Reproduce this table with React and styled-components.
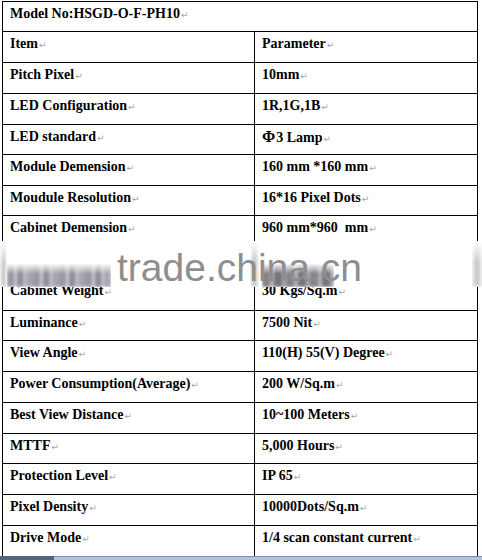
import React from "react";
import styled, { createGlobalStyle } from "styled-components";

const Global = createGlobalStyle`
  html, body { margin: 0; padding: 0; background: #fff; overflow: hidden; }
  #root { width: 482px; height: 560px; }
`;

const Page = styled.div`
  position: relative;
  width: 482px;
  height: 560px;
  display: flex;
  flex-direction: column;
  background: #fff;
  font-family: "Liberation Serif", "Times New Roman", serif;
`;

const Table = styled.div`
  box-sizing: border-box;
  width: 476px;
  margin: 1px 0 0 2px;
  border: 1px solid #000;
  border-bottom: none;
  display: flex;
  flex-direction: column;
`;

const Row = styled.div`
  box-sizing: border-box;
  height: ${(p) => p.$h}px;
  display: grid;
  grid-template-columns: ${(p) => (p.$full ? "1fr" : "252px 1fr")};
  border-bottom: ${(p) => (p.$noLine ? "none" : "1px solid #000")};
`;

const Cell = styled.div`
  box-sizing: border-box;
  padding: ${(p) => p.$pt ?? 4}px 0 0 7px;
  font-size: 14px;
  line-height: 15px;
  font-weight: bold;
  color: #000;
  white-space: pre;
  border-right: ${(p) => (p.$divider ? "1px solid #000" : "none")};
`;

const Mark = styled.span`
  font-family: "DejaVu Sans", sans-serif;
  font-weight: normal;
  font-size: 9px;
  color: #a4a4a4;
  margin-left: 1px;
`;

const Phi = styled.span`
  font-size: 16px;
  margin-right: 1px;
`;

const Band = styled.div`
  position: absolute;
  left: 0;
  top: 241px;
  width: 482px;
  height: 46px;
  background: #fff;
  overflow: hidden;
`;

const Smudge = styled.div`
  position: absolute;
  left: ${(p) => p.$x}px;
  top: ${(p) => p.$y}px;
  width: ${(p) => p.$w}px;
  height: ${(p) => p.$hh}px;
  background: ${(p) => p.$bg};
  filter: blur(${(p) => p.$blur}px);
  opacity: ${(p) => p.$o};
  -webkit-mask-image: linear-gradient(to bottom, transparent 0%, #000 45%, #000 100%);
  mask-image: linear-gradient(to bottom, transparent 0%, #000 45%, #000 100%);
`;

const Watermark = styled.div`
  position: absolute;
  left: 117px;
  top: 7px;
  font-family: "Liberation Sans", Arial, sans-serif;
  font-size: 39px;
  line-height: 39px;
  color: #8e8e8e;
  white-space: nowrap;
`;

const Bar = styled.div`
  display: grid;
  grid-template-columns: 54px 1fr;
  height: 4px;
`;

const BarLeft = styled.div`
  background: #55647a;
`;

const BarRight = styled.div`
  background: #b2c2d8;
  border-top: 1px solid #7a8fae;
`;

const rows = [
  ["Item", "Parameter", 31],
  ["Pitch Pixel", "10mm", 31],
  ["LED Configuration", "1R,1G,1B", 31],
  ["LED standard", "PHI", 30],
  ["Module Demension", "160 mm *160 mm", 31],
  ["Moudule Resolution", "16*16 Pixel Dots", 30],
  ["Cabinet Demension", "960 mm*960  mm", 62, true],
  ["Cabinet Weight", "30 Kgs/Sq.m", 33, false, 5],
  ["Luminance", "7500 Nit", 30],
  ["View Angle", "110(H) 55(V) Degree", 31],
  ["Power Consumption(Average)", "200 W/Sq.m", 31],
  ["Best View Distance", "10~100 Meters", 31],
  ["MTTF", "5,000 Hours", 30],
  ["Protection Level", "IP 65", 31],
  ["Pixel Density", "10000Dots/Sq.m", 31],
  ["Drive Mode", "1/4 scan constant current", 30, true],
];

const stripesA =
  "repeating-linear-gradient(90deg, #8a8790 0px, #8a8790 7px, #c6bfd0 7px, #c6bfd0 10px, #7c7c84 10px, #7c7c84 16px, #b3aec0 16px, #b3aec0 20px, #9a96a2 20px, #9a96a2 26px)";
const stripesB =
  "repeating-linear-gradient(90deg, #6f6f74 0px, #6f6f74 8px, #a8a4b0 8px, #a8a4b0 12px, #5e5e64 12px, #5e5e64 20px, #9d98a8 20px, #9d98a8 24px)";
const lineBlur = "linear-gradient(90deg, transparent, #9a9a9a, transparent)";

export default function App() {
  return (
    <>
      <Global />
      <Page>
        <Table>
          <Row $h={30} $full>
            <Cell>
              Model No:HSGD-O-F-PH10<Mark>↵</Mark>
            </Cell>
          </Row>
          {rows.map(([k, v, h, noLine, pt]) => (
            <Row key={k} $h={h} $noLine={noLine}>
              <Cell $divider $pt={pt}>
                {k}
                <Mark>↵</Mark>
              </Cell>
              <Cell $pt={pt}>
                {v === "PHI" ? (
                  <>
                    <Phi>Φ</Phi>3 Lamp
                  </>
                ) : (
                  v
                )}
                <Mark>↵</Mark>
              </Cell>
            </Row>
          ))}
        </Table>
        <Bar>
          <BarLeft />
          <BarRight />
        </Bar>
        <Band>
          <Smudge $x={0} $y={0} $w={7} $hh={46} $bg={lineBlur} $blur={1.5} $o={0.7} />
          <Smudge $x={250} $y={0} $w={9} $hh={46} $bg={lineBlur} $blur={1.5} $o={0.7} />
          <Smudge $x={472} $y={0} $w={10} $hh={46} $bg={lineBlur} $blur={2} $o={0.8} />
          <Smudge $x={7} $y={22} $w={104} $hh={24} $bg={stripesA} $blur={1.5} $o={0.85} />
          <Smudge $x={262} $y={22} $w={72} $hh={24} $bg={stripesB} $blur={1.5} $o={0.85} />
          <Watermark>trade.china.cn</Watermark>
        </Band>
      </Page>
    </>
  );
}
